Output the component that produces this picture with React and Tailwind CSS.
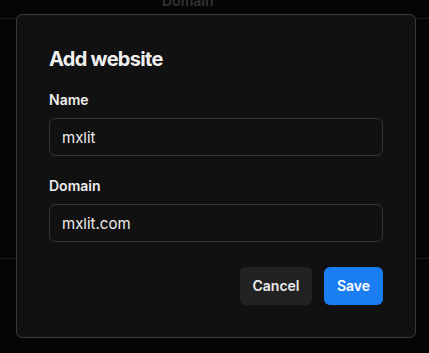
import React from 'react';

function Field({ label, value }) {
    return (
        <div className="flex flex-col gap-2">
            <label className="text-sm leading-5 font-semibold text-[#ededed]">{label}</label>
            <input
                readOnly
                value={value}
                className="h-[38px] w-full rounded-md border border-[#333] bg-[#111] px-3 text-[15px] text-[#ededed] outline-none"
            />
        </div>
    );
}

export default function App() {
    return (
        <div className="relative h-[353px] w-[429px] overflow-hidden bg-[#050505] font-['Inter',sans-serif]">
            {/* page behind the overlay */}
            <div className="flex flex-col">
                <div className="flex h-[19px] items-start border-b border-[#1a1a1a] pl-[162px]">
                    <span className="-mt-[6px] text-sm leading-none font-semibold text-[#333]">Domain</span>
                </div>
                <div className="h-[240px] border-b border-[#1a1a1a]" />
            </div>

            {/* dialog */}
            <div className="absolute left-4 top-[14px] flex h-[324px] w-[400px] flex-col rounded-md border border-[#3a3a3a] bg-[#111] px-8 pb-8 pt-8">
                <h2 className="text-xl leading-6 font-bold tracking-[-0.035em] text-[#f0f0f0]">Add website</h2>
                <div className="mt-[19px] flex flex-col gap-5">
                    <Field label="Name" value="mxlit" />
                    <Field label="Domain" value="mxlit.com" />
                </div>
                <div className="mt-auto flex justify-end gap-3">
                    <button className="h-[38px] w-[72px] rounded-md bg-[#222] text-sm font-semibold text-[#ededed]">Cancel</button>
                    <button className="h-[38px] w-[59px] rounded-md bg-[#1a7ef2] text-sm font-semibold text-white">Save</button>
                </div>
            </div>
        </div>
    );
}
